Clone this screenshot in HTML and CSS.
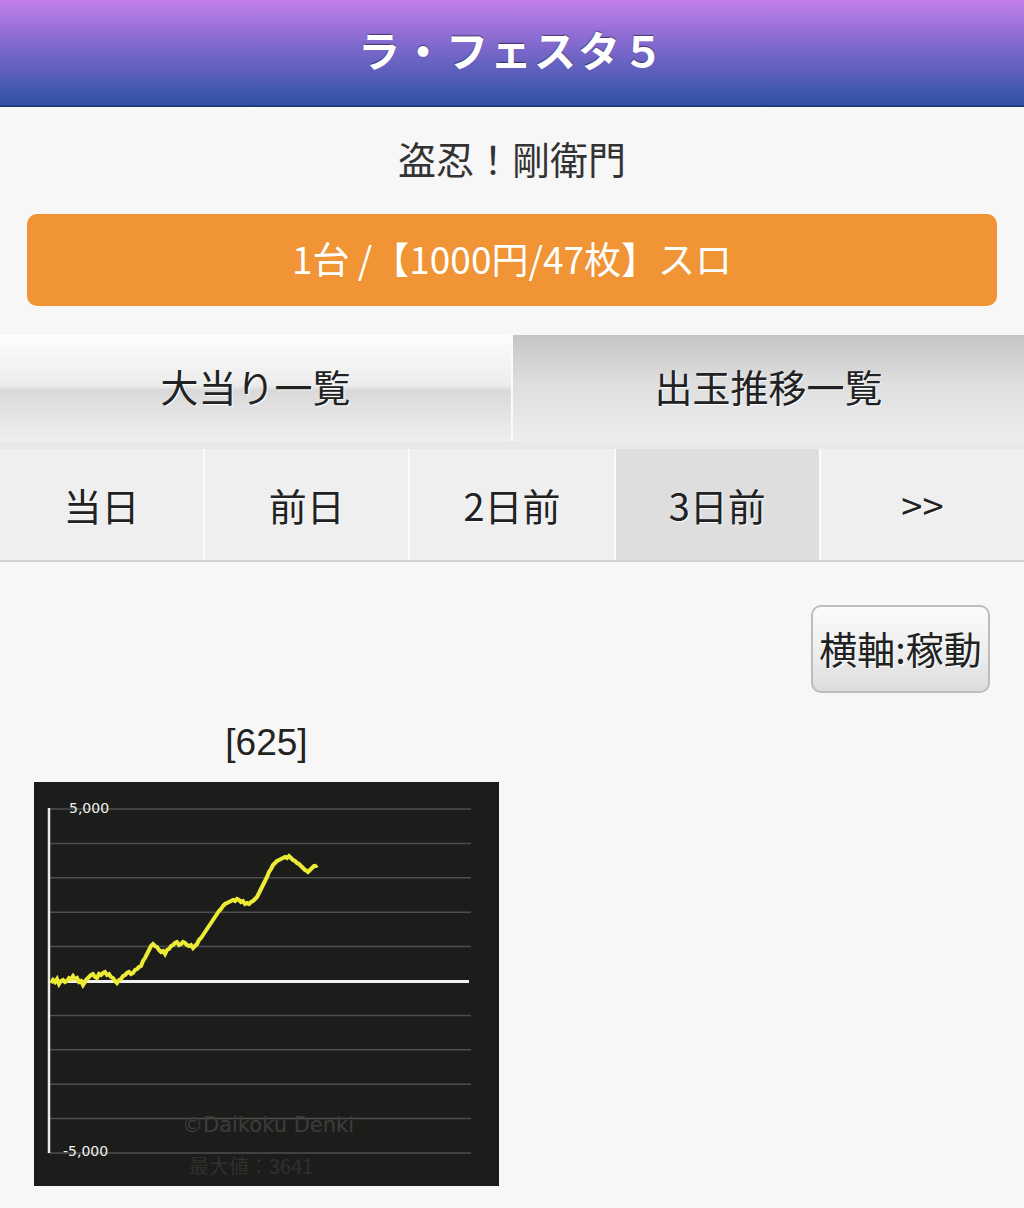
FILE: index.html
```html
<!DOCTYPE html>
<html lang="ja">
<head>
    <meta charset="UTF-8">
    <meta name="viewport" content="width=device-width, initial-scale=1.0">
    <title>ラ・フェスタ５</title>
    <link rel="stylesheet" href="styles.css">
</head>
<body>

<header class="title-bar">
    <h1>ラ・フェスタ５</h1>
</header>

<p class="machine-name">盗忍！剛衛門</p>

<div class="rate-bar">1台 /【1000円/47枚】スロ</div>

<nav class="tabs">
    <a class="tab" href="#">大当り一覧</a>
    <a class="tab tab-active" href="#">出玉推移一覧</a>
</nav>

<nav class="days">
    <a class="day" href="#">当日</a>
    <a class="day" href="#">前日</a>
    <a class="day" href="#">2日前</a>
    <a class="day day-active" href="#">3日前</a>
    <a class="day" href="#">&gt;&gt;</a>
</nav>

<div class="axis-row">
    <button class="axis-btn" type="button">横軸:稼動</button>
</div>

<div class="graph-block">
    <p class="graph-caption">[625]</p>
    <svg class="graph" width="465" height="404" viewBox="0 0 465 404">
        <rect width="465" height="404" fill="#1c1d1b"/>
        <g stroke="#4e4f4d" stroke-width="1.5">
            <line x1="15" y1="27" x2="437" y2="27"/>
            <line x1="15" y1="61.4" x2="437" y2="61.4"/>
            <line x1="15" y1="95.8" x2="437" y2="95.8"/>
            <line x1="15" y1="130.2" x2="437" y2="130.2"/>
            <line x1="15" y1="164.6" x2="437" y2="164.6"/>
            <line x1="15" y1="233.4" x2="437" y2="233.4"/>
            <line x1="15" y1="267.8" x2="437" y2="267.8"/>
            <line x1="15" y1="302.2" x2="437" y2="302.2"/>
            <line x1="15" y1="336.6" x2="437" y2="336.6"/>
            <line x1="15" y1="371" x2="437" y2="371"/>
        </g>
        <line x1="15" y1="26" x2="15" y2="371" stroke="#e8e8e8" stroke-width="2.5"/>
        <text class="tick" x="35" y="31">5,000</text>
        <text class="tick" x="29" y="374">-5,000</text>
        <text class="watermark" x="148" y="350">©Daikoku Denki</text>
        <text class="maxval" x="155" y="392">最大値：3641</text>
        <line x1="17" y1="199.5" x2="435" y2="199.5" stroke="#f0f0f0" stroke-width="3"/>
        <polyline fill="none" stroke="#eceb36" stroke-width="4" stroke-linejoin="miter"
            points="17,201 19,198 21,200 23,197 25,202 27,199 29,198 31,200 33,199 35,196 37,197 39,194 41,197 43,196 45,200 47,199 49,203 51,200 52,198 54,196 55,195 57,193 59,192 61,195 63,196 65,192 67,193 69,191 71,190 73,193 75,192 77,195 79,196 81,199 83,201 85,198 87,197 89,194 91,193 93,191 95,190 97,192 99,191 101,188 103,187 105,185 107,184 109,179 111,176 113,172 115,168 117,164 119,162 121,164 123,165 125,168 127,170 129,169 131,172 133,168 135,167 137,164 139,163 141,161 143,160 145,163 147,162 149,160 151,161 153,163 155,164 157,163 159,166 161,164 163,162 165,158 167,156 169,153 171,150 173,147 175,144 177,141 179,138 181,135 183,132 185,129 187,127 189,124 191,122 193,121 195,120 197,119 199,118 201,119 203,117 205,118 207,120 209,119 211,122 213,121 215,122 217,120 219,119 221,117 223,115 225,111 227,107 229,103 231,99 233,95 235,90 237,87 239,83 241,81 243,79 245,78 247,77 249,76 251,75 253,76 255,74 257,76 259,78 261,79 263,81 265,82 267,84 269,86 271,88 273,89 274,90 276,88 277,87 279,85 280,84 282,84 283,83"/>
    </svg>
</div>

</body>
</html>
```

FILE: styles.css
```css
body {
    margin: 0;
    background-color: #f7f7f7;
    font-family: "Noto Sans CJK JP", "Noto Sans", sans-serif;
    color: #222;
}
a {
    text-decoration: none;
    color: #222;
}
.title-bar {
    height: 105px;
    background: linear-gradient(to bottom, #c27ee9 0%, #7d68cc 45%, #2f52a4 100%);
    border-bottom: 2px solid #1d3c7c;
    display: flex;
    align-items: center;
    justify-content: center;
}
.title-bar h1 {
    margin: 0 0 8px;
    color: #fff;
    font-size: 42px;
    font-weight: bold;
    letter-spacing: 2px;
    text-shadow: 0 -1px 1px rgba(0, 0, 0, 0.5);
}
.machine-name {
    margin: 0;
    height: 107px;
    line-height: 102px;
    text-align: center;
    font-size: 38px;
    color: #333;
}
.rate-bar {
    margin: 0 27px;
    height: 92px;
    line-height: 88px;
    border-radius: 10px;
    background-color: #f09436;
    color: #fff;
    text-align: center;
    font-size: 37px;
}
.tabs {
    display: flex;
    margin-top: 29px;
    height: 106px;
    border-bottom: 8px solid #e9e9e9;
}
.tab {
    flex: 1;
    display: flex;
    align-items: center;
    justify-content: center;
    padding-bottom: 6px;
    font-size: 38px;
    text-shadow: 1px 1px 1px #fff;
    background: linear-gradient(to bottom, #fdfdfd 0%, #ececec 48%, #d9d9d9 52%, #e4e4e4 75%, #efefef 100%);
}
.tab-active {
    border-left: 2px solid #fbfbfb;
    background: linear-gradient(to bottom, #c6c6c6 0%, #dedede 45%, #eeeeee 100%);
}
.days {
    display: flex;
    height: 111px;
    border-bottom: 2px solid #d3d3d3;
}
.day {
    flex: 1;
    display: flex;
    align-items: center;
    justify-content: center;
    font-size: 38px;
    background-color: #efefef;
    border-left: 2px solid #fbfbfb;
    text-shadow: 1px 1px 1px #fff;
}
.day:first-child {
    border-left: none;
}
.day-active {
    background-color: #dedede;
}
.axis-row {
    display: flex;
    justify-content: flex-end;
    padding: 43px 34px 0 0;
}
.axis-btn {
    width: 179px;
    height: 88px;
    padding: 0 0 4px;
    border: 2px solid #bdbdbd;
    border-radius: 10px;
    background: linear-gradient(to bottom, #fbfbfb 0%, #ececec 60%, #dcdcdc 100%);
    font-family: "Noto Sans CJK JP", sans-serif;
    font-size: 38px;
    color: #222;
    white-space: nowrap;
    text-shadow: 1px 1px 1px #fff;
}
.graph-block {
    width: 465px;
    margin-left: 34px;
}
.graph-caption {
    margin: 28px 0 17px;
    height: 44px;
    line-height: 44px;
    text-align: center;
    font-family: "Liberation Sans", Arial, sans-serif;
    font-size: 37px;
    color: #222;
}
.graph {
    display: block;
}
.tick {
    font-family: "DejaVu Sans", sans-serif;
    font-size: 14px;
    fill: #f0f0f0;
}
.watermark {
    font-family: "DejaVu Sans", sans-serif;
    font-size: 21px;
    fill: #3c3d3b;
}
.maxval {
    font-family: "Noto Sans CJK JP", sans-serif;
    font-size: 20px;
    fill: #2f302e;
}
```
